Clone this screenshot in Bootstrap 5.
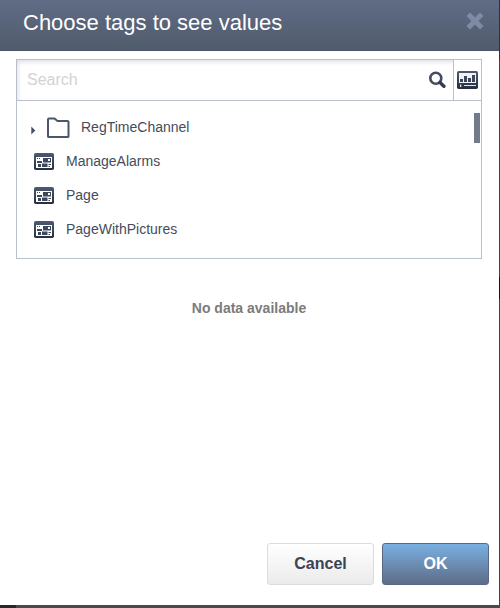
<!DOCTYPE html>
<html lang="en">
<head>
<meta charset="utf-8">
<meta name="viewport" content="width=device-width, initial-scale=1">
<title>Choose tags to see values</title>
<link href="https://cdn.jsdelivr.net/npm/bootstrap@5.3.0/dist/css/bootstrap.min.css" rel="stylesheet">
<style>
body{font-family:"Liberation Sans",Arial,sans-serif;font-size:14px;color:#454c5c;height:608px;overflow:hidden;background:linear-gradient(90deg,#272928 16px,#4a4a4a 16px)}
.dialog-pane{width:499px;height:605px}
.page-edge{width:1px;height:605px;background:linear-gradient(#303236 0 60px,#444 60px 277px,#151515 277px 299px,#444 299px)}
.dialog-head{height:51px;padding:0 15px 4px 23px;background:linear-gradient(#606c86,#505b6b);border-bottom:1px solid #4b5667}
.dialog-title{font-size:22px;line-height:26px;font-weight:400}
.dialog-body{margin:8px 17px 0 16px}
.tag-picker{border:1px solid #b9bfcb;height:200px}
.search-row{height:41px;border-bottom:1px solid #b9bfcb}
.search-field{box-shadow:inset 2px 3px 4px -1px #dcdfe1;padding:0 7px 0 10px}
.search-field input{font:16px "Liberation Sans",Arial,sans-serif}
.search-field input::placeholder{color:#d3d3d3;opacity:1}
.chart-btn{width:28px;border-left:1px solid #b9bfcb!important}
.tag-tree{padding:9px 0 0 14px;flex:1}
.tag-item{height:34px;line-height:34px}
.tag-item.leaf{padding-left:3px;gap:12px}
.tag-item.leaf svg{margin-top:1px}
.folder-icon{margin:2px 7px 0 8px}
.caret-icon{margin-top:6px}
.scroll-thumb{width:6px;height:30px;margin:12px 1px 0 0;background:#737b88}
.empty-note{margin-top:41px;line-height:16px;font-weight:700;color:#7b7b7b}
.dialog-foot{padding:0 10px 20px 0;gap:8px}
.dialog-foot .btn{width:107px;height:42px;font-size:16px;font-weight:700;border-radius:3px;padding:0}
.btn-plain{color:#3c4354;border-color:#dcdcdc;background:linear-gradient(#fff,#ebebeb)}
.btn-ok{color:#fff;border-color:#586884;background:linear-gradient(#79b0e2,#5e6c87)}
</style>
</head>
<body>
<svg width="0" height="0" class="position-absolute" aria-hidden="true">
<defs>
<linearGradient id="ink" x1="0" y1="0" x2="0" y2="1"><stop stop-color="#4d5a73"/><stop offset="1" stop-color="#272f3e"/></linearGradient>
<symbol id="page-icon" viewBox="0 0 20 17">
<rect width="20" height="17" rx="1.800" fill="url(#ink)"/>
<path fill="#fff" d="M2 4h16v11H2z"/>
<path fill="#3d485d" d="M3 5h1v1H3zM5 5h1v1H5zM3 8h5v2H3zM9 5h8v4.500H9zM4 11h3v3H4zM8 10.500h5.500V14H8zM14.500 11h2.500v1h-2.500zM14.500 13h1.500v1h-1.500z"/>
<path fill="#fff" d="M14 6h2v2h-2z"/>
</symbol>
</defs>
</svg>
<div class="d-flex">
<main class="dialog-pane bg-white d-flex flex-column">
<header class="dialog-head d-flex align-items-center justify-content-between">
<h1 class="dialog-title text-white mb-0">Choose tags to see values</h1>
<button class="btn p-0 border-0 d-flex mb-1" aria-label="Close"><svg width="18" height="18" viewBox="0 0 18 18"><path d="M4 4l10 10M14 4L4 14" stroke="#7f8ba4" stroke-width="5" stroke-linecap="square" stroke-linejoin="round"/></svg></button>
</header>
<section class="dialog-body">
<div class="tag-picker d-flex flex-column">
<div class="search-row d-flex">
<div class="search-field flex-grow-1 d-flex align-items-center">
<input class="border-0 p-0 bg-transparent flex-grow-1" type="text" placeholder="Search" aria-label="Search">
<svg width="18" height="18" viewBox="0 0 18 18" fill="none"><circle cx="7.800" cy="7.200" r="5.500" stroke="#434d62" stroke-width="2.600"/><path d="M12 11.500l3.900 3.800" stroke="#343d4f" stroke-width="3.400" stroke-linecap="round"/></svg>
</div>
<button class="chart-btn btn p-0 border-0 rounded-0 d-flex align-items-center justify-content-center" aria-label="Charts"><svg width="21" height="18" viewBox="0 0 21 18"><rect width="21" height="18" rx="1.700" fill="url(#ink)"/><path fill="#f1f2f4" d="M2 2h17v10H2z"/><path fill="#3d475a" d="M3 8h3v3H3zM7 5h3v6H7zM11 7h3v4h-3zM15 4h3v7h-3z"/><path fill="#e2e4e8" d="M3 13.500h1.300v2.500H3zM7 14h12v1H7z"/></svg></button>
</div>
<div class="d-flex">
<ul class="tag-tree list-unstyled mb-0">
<li class="tag-item d-flex align-items-center"><svg width="5" height="9" viewBox="0 0 5 9" class="caret-icon"><path d="M.3 .5L4.300 4.500.3 8.500z" fill="#465066"/></svg><svg class="folder-icon" width="30" height="22" viewBox="0 0 30 22"><path d="M4 19.500V2.500Q4 1.500 5 1.500H10.500L13.500 4H23.500Q24.500 4 24.500 5V19.500Q24.500 20 23.500 20H5Q4 20 4 19.500z" fill="none" stroke="#4b566d" stroke-width="2"/></svg><span>RegTimeChannel</span></li>
<li class="tag-item leaf d-flex align-items-center"><svg width="20" height="17"><use href="#page-icon"/></svg><span>ManageAlarms</span></li>
<li class="tag-item leaf d-flex align-items-center"><svg width="20" height="17"><use href="#page-icon"/></svg><span>Page</span></li>
<li class="tag-item leaf d-flex align-items-center"><svg width="20" height="17"><use href="#page-icon"/></svg><span>PageWithPictures</span></li>
</ul>
<div class="scroll-thumb"></div>
</div>
</div>
<p class="empty-note text-center mb-0">No data available</p>
</section>
<footer class="dialog-foot d-flex justify-content-end mt-auto">
<button class="btn btn-plain">Cancel</button>
<button class="btn btn-ok">OK</button>
</footer>
</main>
<div class="page-edge"></div>
</div>
<script src="https://cdn.jsdelivr.net/npm/bootstrap@5.3.0/dist/js/bootstrap.bundle.min.js"></script>
</body>
</html>
